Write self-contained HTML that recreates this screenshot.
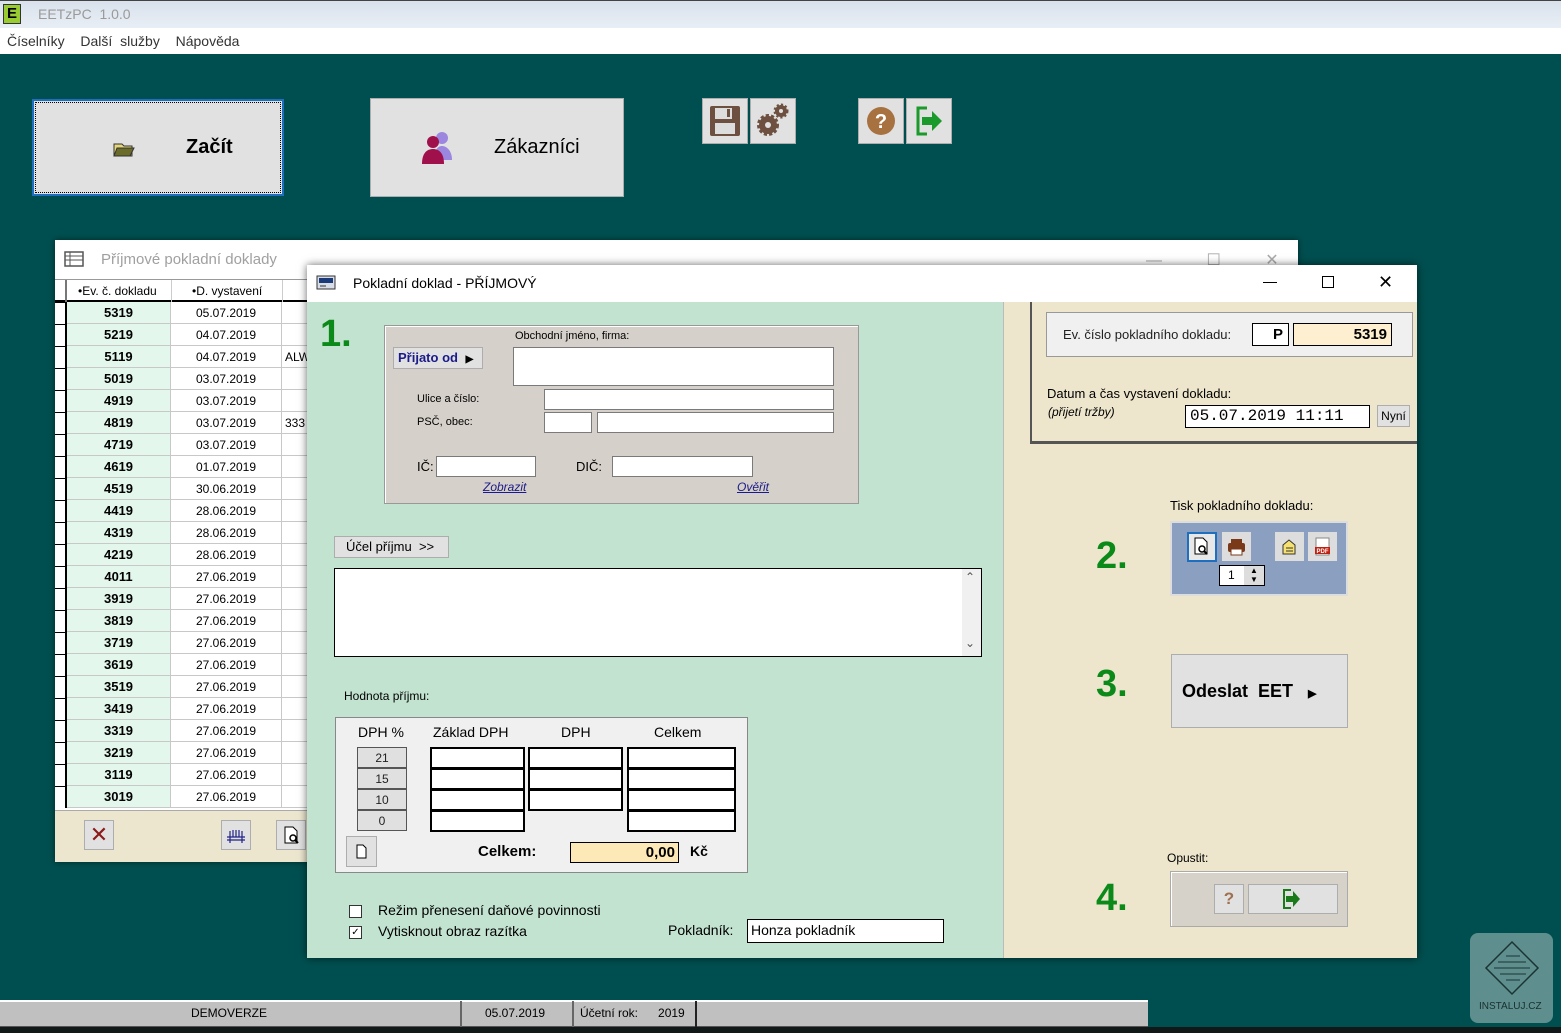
<!DOCTYPE html>
<html><head><meta charset="utf-8"><style>
*{box-sizing:border-box;margin:0;padding:0}
body{width:1561px;height:1033px;overflow:hidden;background:#004f50;font-family:"Liberation Sans",sans-serif;position:relative;font-size:12px;color:#000}
.a{position:absolute}
.btn{position:absolute;background:#e1e1e1;border:1px solid #adadad}
.inp{position:absolute;background:#fff;border:1px solid #7a7a7a}
.row{position:absolute;left:0;height:22px;width:300px;border-bottom:1px solid #c8c8c8}
.row .c1{position:absolute;left:12px;width:104px;height:21px;background:#e3f7ec;text-align:center;font-weight:bold;font-size:13px;line-height:22px;border-right:1px solid #c8c8c8}
.row .c2{position:absolute;left:116px;width:111px;height:21px;background:#fff;text-align:center;font-size:12px;line-height:22px;border-right:1px solid #c8c8c8}
.row .c3{position:absolute;left:227px;width:30px;height:21px;background:#fff;font-size:12px;line-height:22px;padding-left:3px}
.row .c0{position:absolute;left:0;width:12px;height:22px;background:#fff;border-right:2px solid #000;border-top:1px solid #000}
.g{color:#0b8a1a;font-weight:bold;font-size:38px}
.cell{position:absolute;background:#fff;border:2px solid #000;height:22px}
.dp{position:absolute;left:357px;width:50px;height:21px;background:#e0e0e0;border:1px solid #555;text-align:center;font-size:12px;line-height:20px;color:#222}
</style></head><body>
<!-- title bar -->
<div class="a" style="left:0;top:0;width:1561px;height:28px;background:linear-gradient(#d9e2ec,#e8eef5);border-top:1px solid #444"></div>
<div class="a" style="left:3px;top:4px;width:18px;height:20px;background:#9c3;border:1px solid #333;font-weight:bold;font-size:15px;text-align:center;line-height:18px">E</div>
<div class="a" style="left:38px;top:6px;font-size:14px;color:#9a9a9a">EETzPC&nbsp; 1.0.0</div>
<div class="a" style="left:0;top:28px;width:1561px;height:26px;background:#fff"></div>
<div class="a" style="left:7px;top:33px;font-size:14px;color:#333;word-spacing:4px">Číselníky&nbsp; Další služby&nbsp; Nápověda</div>

<!-- top buttons -->
<div class="a" style="left:32px;top:99px;width:252px;height:97px;background:#e1e1e1;border:2px solid #1e6fc0;outline:1px dotted #000;outline-offset:-4px"></div>
<div class="a" style="left:112px;top:138px;width:24px;height:20px">
<svg width="24" height="20"><path d="M2 6h8l2 2h8v10H2z" fill="#e6d77a" stroke="#333"/><path d="M5 10h17l-4 8H2z" fill="#6b6b2a" stroke="#333"/></svg></div>
<div class="a" style="left:186px;top:136px;font-size:20px;font-weight:bold">Začít</div>
<div class="btn" style="left:370px;top:98px;width:254px;height:99px"></div>
<svg class="a" style="left:420px;top:130px" width="36" height="36"><circle cx="22" cy="8" r="6" fill="#9b86e0"/><path d="M14 30c0-10 4-14 8-14s10 4 10 14z" fill="#9b86e0"/><circle cx="13" cy="12" r="6" fill="#a0104a"/><path d="M2 34c0-11 5-15 11-15s11 4 11 15z" fill="#a0104a"/></svg>
<div class="a" style="left:494px;top:136px;font-size:20px">Zákazníci</div>
<div class="btn" style="left:702px;top:98px;width:46px;height:46px"><svg width="44" height="44"><rect x="7" y="7" width="30" height="30" rx="2" fill="#6d5040"/><rect x="12" y="9" width="17" height="11" fill="#ddd"/><rect x="12" y="24" width="20" height="11" fill="#ddd"/><rect x="24" y="10" width="3" height="8" fill="#6d5040"/></svg></div>
<div class="btn" style="left:750px;top:98px;width:46px;height:46px"><svg width="44" height="44"><circle cx="17" cy="26" r="9" fill="#6d5040" stroke="#6d5040" stroke-width="4" stroke-dasharray="3 2"/><circle cx="17" cy="26" r="3" fill="#e1e1e1"/><circle cx="30" cy="12" r="6" fill="#6d5040" stroke="#6d5040" stroke-width="3" stroke-dasharray="2 2"/><circle cx="30" cy="12" r="2" fill="#e1e1e1"/></svg></div>
<div class="btn" style="left:858px;top:98px;width:46px;height:46px"><svg width="44" height="44"><circle cx="22" cy="22" r="14" fill="#a87240"/><text x="22" y="29" font-size="20" font-weight="bold" fill="#fff" text-anchor="middle" font-family="Liberation Sans">?</text></svg></div>
<div class="btn" style="left:906px;top:98px;width:46px;height:46px"><svg width="44" height="44"><path d="M20 9H11v26h9" fill="none" stroke="#1a9a2a" stroke-width="3"/><path d="M15 18h10v-6l10 10-10 10v-6H15z" fill="#1a9a2a"/></svg></div>

<!-- left window -->
<div class="a" style="left:55px;top:240px;width:1243px;height:622px;background:#fff;box-shadow:0 0 6px rgba(0,0,0,.5)"></div>
<svg class="a" style="left:64px;top:251px" width="20" height="16"><rect x="1" y="1" width="18" height="14" fill="none" stroke="#555" stroke-width="1.5"/><path d="M1 5h18M1 9h18M6 1v14" stroke="#555"/></svg>
<div class="a" style="left:101px;top:251px;font-size:15px;color:#a0a0a0">Příjmové pokladní doklady</div>
<div class="a" style="left:1146px;top:250px;color:#aaa;font-size:16px;word-spacing:40px">— ☐ ✕</div>
<div class="a" style="left:55px;top:279px;width:260px;height:23px;background:#fff;border-top:1px solid #999;border-bottom:2px solid #000"></div>
<div class="a" style="left:65px;top:280px;width:2px;height:22px;background:#777"></div>
<div class="a" style="left:78px;top:284px;font-size:12px">•Ev. č. dokladu</div>
<div class="a" style="left:171px;top:280px;width:1px;height:22px;background:#ccc"></div>
<div class="a" style="left:192px;top:284px;font-size:12px">•D. vystavení</div>
<div class="a" style="left:282px;top:280px;width:1px;height:22px;background:#ccc"></div>
<div class="a" style="left:55px;top:302px;width:260px;height:508px">
<div class="row" style="top:0"><div class="c0"></div><div class="c1">5319</div><div class="c2">05.07.2019</div><div class="c3"></div></div>
<div class="row" style="top:22px"><div class="c0"></div><div class="c1">5219</div><div class="c2">04.07.2019</div><div class="c3"></div></div>
<div class="row" style="top:44px"><div class="c0"></div><div class="c1">5119</div><div class="c2">04.07.2019</div><div class="c3">ALW</div></div>
<div class="row" style="top:66px"><div class="c0"></div><div class="c1">5019</div><div class="c2">03.07.2019</div><div class="c3"></div></div>
<div class="row" style="top:88px"><div class="c0"></div><div class="c1">4919</div><div class="c2">03.07.2019</div><div class="c3"></div></div>
<div class="row" style="top:110px"><div class="c0"></div><div class="c1">4819</div><div class="c2">03.07.2019</div><div class="c3">333</div></div>
<div class="row" style="top:132px"><div class="c0"></div><div class="c1">4719</div><div class="c2">03.07.2019</div><div class="c3"></div></div>
<div class="row" style="top:154px"><div class="c0"></div><div class="c1">4619</div><div class="c2">01.07.2019</div><div class="c3"></div></div>
<div class="row" style="top:176px"><div class="c0"></div><div class="c1">4519</div><div class="c2">30.06.2019</div><div class="c3"></div></div>
<div class="row" style="top:198px"><div class="c0"></div><div class="c1">4419</div><div class="c2">28.06.2019</div><div class="c3"></div></div>
<div class="row" style="top:220px"><div class="c0"></div><div class="c1">4319</div><div class="c2">28.06.2019</div><div class="c3"></div></div>
<div class="row" style="top:242px"><div class="c0"></div><div class="c1">4219</div><div class="c2">28.06.2019</div><div class="c3"></div></div>
<div class="row" style="top:264px"><div class="c0"></div><div class="c1">4011</div><div class="c2">27.06.2019</div><div class="c3"></div></div>
<div class="row" style="top:286px"><div class="c0"></div><div class="c1">3919</div><div class="c2">27.06.2019</div><div class="c3"></div></div>
<div class="row" style="top:308px"><div class="c0"></div><div class="c1">3819</div><div class="c2">27.06.2019</div><div class="c3"></div></div>
<div class="row" style="top:330px"><div class="c0"></div><div class="c1">3719</div><div class="c2">27.06.2019</div><div class="c3"></div></div>
<div class="row" style="top:352px"><div class="c0"></div><div class="c1">3619</div><div class="c2">27.06.2019</div><div class="c3"></div></div>
<div class="row" style="top:374px"><div class="c0"></div><div class="c1">3519</div><div class="c2">27.06.2019</div><div class="c3"></div></div>
<div class="row" style="top:396px"><div class="c0"></div><div class="c1">3419</div><div class="c2">27.06.2019</div><div class="c3"></div></div>
<div class="row" style="top:418px"><div class="c0"></div><div class="c1">3319</div><div class="c2">27.06.2019</div><div class="c3"></div></div>
<div class="row" style="top:440px"><div class="c0"></div><div class="c1">3219</div><div class="c2">27.06.2019</div><div class="c3"></div></div>
<div class="row" style="top:462px"><div class="c0"></div><div class="c1">3119</div><div class="c2">27.06.2019</div><div class="c3"></div></div>
<div class="row" style="top:484px"><div class="c0"></div><div class="c1">3019</div><div class="c2">27.06.2019</div><div class="c3"></div></div>
</div>
<div class="a" style="left:55px;top:810px;width:260px;height:52px;background:#ece6cf;border-top:1px solid #aaa"></div>
<div class="btn" style="left:84px;top:820px;width:30px;height:30px;color:#8b1a1a;font-size:22px;text-align:center;line-height:27px">✕</div>
<div class="btn" style="left:221px;top:820px;width:30px;height:30px"><svg width="28" height="28"><path d="M5 16h18M5 19h18M8 10v12M11 9v7M14 9v7M17 9v7M20 10v12" stroke="#22228a" stroke-width="1.2"/></svg></div>
<div class="btn" style="left:276px;top:820px;width:30px;height:30px"><svg width="28" height="28"><path d="M8 6h8l4 4v12H8z" fill="#fff" stroke="#000"/><circle cx="16" cy="17" r="3" fill="none" stroke="#000" stroke-width="1.5"/><path d="M18 19l3 3" stroke="#000" stroke-width="2"/></svg></div>

<!-- main dialog -->
<div class="a" style="left:307px;top:265px;width:1110px;height:693px;background:#c3e3d1;box-shadow:0 0 8px rgba(0,0,0,.6)"></div>
<div class="a" style="left:307px;top:265px;width:1110px;height:37px;background:#fff"></div>
<svg class="a" style="left:316px;top:275px" width="20" height="16"><rect x="1" y="1" width="18" height="13" fill="#d8dde8" stroke="#333"/><rect x="3" y="3" width="14" height="5" fill="#1a3a7a"/><path d="M4 11h6" stroke="#333"/></svg>
<div class="a" style="left:353px;top:275px;font-size:14px">Pokladní doklad - PŘÍJMOVÝ</div>
<div class="a" style="left:1263px;top:282px;width:14px;height:1px;background:#000"></div>
<div class="a" style="left:1322px;top:276px;width:12px;height:12px;border:1px solid #000"></div>
<div class="a" style="left:1378px;top:272px;font-size:18px;line-height:20px">✕</div>
<div class="a" style="left:1003px;top:302px;width:414px;height:656px;background:#ede6cc;border-left:1px solid #bbb"></div>

<div class="a g" style="left:320px;top:313px">1.</div>
<div class="a" style="left:384px;top:325px;width:475px;height:179px;background:#d5d0c9;border:1px solid #999;box-shadow:inset 1px 1px 0 #fff"></div>
<div class="btn" style="left:393px;top:347px;width:90px;height:22px;color:#1a1a8a;font-weight:bold;font-size:13px;line-height:20px;padding-left:4px">Přijato od <span style="font-size:10px;color:#000;margin-left:4px">▶</span></div>
<div class="a" style="left:515px;top:330px;font-size:11px">Obchodní jméno, firma:</div>
<div class="inp" style="left:513px;top:347px;width:321px;height:39px"></div>
<div class="a" style="left:417px;top:393px;font-size:11px">Ulice a číslo:</div>
<div class="inp" style="left:544px;top:389px;width:290px;height:21px"></div>
<div class="a" style="left:417px;top:416px;font-size:11px">PSČ, obec:</div>
<div class="inp" style="left:544px;top:412px;width:48px;height:21px"></div>
<div class="inp" style="left:597px;top:412px;width:237px;height:21px"></div>
<div class="a" style="left:417px;top:459px;font-size:13px">IČ:</div>
<div class="inp" style="left:436px;top:456px;width:100px;height:21px"></div>
<div class="a" style="left:576px;top:459px;font-size:13px">DIČ:</div>
<div class="inp" style="left:612px;top:456px;width:141px;height:21px"></div>
<div class="a" style="left:483px;top:480px;font-size:12px;font-style:italic;color:#1a1a8a;text-decoration:underline">Zobrazit</div>
<div class="a" style="left:737px;top:480px;font-size:12px;font-style:italic;color:#1a1a8a;text-decoration:underline">Ověřit</div>

<div class="btn" style="left:334px;top:536px;width:115px;height:22px;font-size:13px;line-height:20px;padding-left:11px">Účel příjmu&nbsp; &gt;&gt;</div>
<div class="a" style="left:334px;top:568px;width:648px;height:89px;background:#fff;border:1px solid #000"></div>
<div class="a" style="left:962px;top:569px;width:19px;height:87px;background:#f0f0f0"></div>
<div class="a" style="left:965px;top:570px;font-size:12px;color:#555">⌃</div>
<div class="a" style="left:965px;top:636px;font-size:12px;color:#555">⌄</div>

<div class="a" style="left:344px;top:689px;font-size:12px">Hodnota příjmu:</div>
<div class="a" style="left:335px;top:717px;width:413px;height:156px;background:#f0f0f0;border:1px solid #888"></div>
<div class="a" style="left:358px;top:724px;font-size:14px">DPH %</div>
<div class="a" style="left:433px;top:724px;font-size:14px">Základ DPH</div>
<div class="a" style="left:561px;top:724px;font-size:14px">DPH</div>
<div class="a" style="left:654px;top:724px;font-size:14px">Celkem</div>
<div class="dp" style="top:747px">21</div><div class="dp" style="top:768px">15</div><div class="dp" style="top:789px">10</div><div class="dp" style="top:810px">0</div>
<div class="cell" style="left:430px;top:747px;width:95px"></div><div class="cell" style="left:430px;top:768px;width:95px"></div><div class="cell" style="left:430px;top:789px;width:95px"></div><div class="cell" style="left:430px;top:810px;width:95px"></div>
<div class="cell" style="left:528px;top:747px;width:95px"></div><div class="cell" style="left:528px;top:768px;width:95px"></div><div class="cell" style="left:528px;top:789px;width:95px"></div>
<div class="cell" style="left:627px;top:747px;width:109px"></div><div class="cell" style="left:627px;top:768px;width:109px"></div><div class="cell" style="left:627px;top:789px;width:109px"></div><div class="cell" style="left:627px;top:810px;width:109px"></div>
<div class="btn" style="left:346px;top:836px;width:31px;height:31px"><svg width="29" height="29"><path d="M10 8h6l3 3v10h-9z" fill="#fff" stroke="#000"/></svg></div>
<div class="a" style="left:478px;top:843px;font-size:15px;font-weight:bold">Celkem:</div>
<div class="a" style="left:570px;top:842px;width:109px;height:21px;background:#fde9b8;border:1px solid #000;text-align:right;padding-right:3px;font-size:15px;font-weight:bold;line-height:19px">0,00</div>
<div class="a" style="left:690px;top:843px;font-size:14px;font-weight:bold">Kč</div>

<div class="a" style="left:349px;top:905px;width:13px;height:13px;background:#fff;border:1px solid #333"></div>
<div class="a" style="left:378px;top:902px;font-size:14px">Režim přenesení daňové povinnosti</div>
<div class="a" style="left:349px;top:926px;width:13px;height:13px;background:#fff;border:1px solid #333;font-size:10px;line-height:11px;text-align:center">✓</div>
<div class="a" style="left:378px;top:923px;font-size:14px">Vytisknout obraz razítka</div>
<div class="a" style="left:668px;top:922px;font-size:14px">Pokladník:</div>
<div class="a" style="left:747px;top:919px;width:197px;height:24px;background:#fff;border:1px solid #000;font-size:14px;padding:2px 3px">Honza pokladník</div>

<!-- right panel -->
<div class="a" style="left:1030px;top:302px;width:387px;height:142px;border-left:2px solid #555;border-bottom:3px solid #555"></div>
<div class="a" style="left:1046px;top:312px;width:367px;height:45px;background:#f0f0f0;border:1px solid #999"></div>
<div class="a" style="left:1063px;top:327px;font-size:13px;color:#222">Ev. číslo pokladního dokladu:</div>
<div class="a" style="left:1252px;top:323px;width:37px;height:23px;background:#fff;border:1px solid #000;text-align:right;padding-right:5px;font-weight:bold;font-size:15px;line-height:21px">P</div>
<div class="a" style="left:1293px;top:323px;width:99px;height:23px;background:#fdefcf;border:1px solid #000;text-align:right;padding-right:4px;font-weight:bold;font-size:15px;line-height:21px">5319</div>
<div class="a" style="left:1047px;top:386px;font-size:13px">Datum a čas vystavení dokladu:</div>
<div class="a" style="left:1048px;top:405px;font-size:12px;font-style:italic">(přijetí tržby)</div>
<div class="a" style="left:1185px;top:405px;width:185px;height:23px;background:#fff;border:1px solid #000;font-family:'Liberation Mono',monospace;font-size:16px;line-height:21px;padding-left:4px">05.07.2019 11:11</div>
<div class="btn" style="left:1377px;top:405px;width:33px;height:22px;font-size:12px;text-align:center;line-height:20px">Nyní</div>

<div class="a" style="left:1170px;top:498px;font-size:13px">Tisk pokladního dokladu:</div>
<div class="a g" style="left:1096px;top:535px">2.</div>
<div class="a" style="left:1170px;top:521px;width:178px;height:75px;background:#8ba0c0;border:2px solid #ddd"></div>
<div class="a" style="left:1187px;top:532px;width:30px;height:30px;background:#e8e8e8;border:2px solid #1e6fc0"><svg width="26" height="26"><path d="M6 4h8l4 4v12H6z" fill="#fff" stroke="#000"/><circle cx="13" cy="15" r="3" fill="none" stroke="#000" stroke-width="1.5"/><path d="M15 17l3 3" stroke="#000" stroke-width="2"/></svg></div>
<div class="a" style="left:1222px;top:532px;width:29px;height:29px;background:#ddd"><svg width="29" height="29"><rect x="9" y="7" width="11" height="5" fill="#7a3a1a"/><rect x="6" y="11" width="17" height="9" rx="2" fill="#7a3a1a"/><rect x="9" y="17" width="11" height="6" fill="#fff" stroke="#7a3a1a"/></svg></div>
<div class="a" style="left:1275px;top:532px;width:29px;height:29px;background:#ddd"><svg width="29" height="29"><path d="M8 13l6-5 6 5v9H8z" fill="#f5e070" stroke="#333"/><path d="M11 16h7M11 19h7" stroke="#333"/></svg></div>
<div class="a" style="left:1308px;top:532px;width:29px;height:29px;background:#ddd"><svg width="29" height="29"><rect x="8" y="6" width="13" height="17" fill="#fff" stroke="#888"/><rect x="7" y="15" width="15" height="7" fill="#c02010"/><text x="14.5" y="21" font-size="6" fill="#fff" text-anchor="middle" font-family="Liberation Sans" font-weight="bold">PDF</text></svg></div>
<div class="a" style="left:1219px;top:565px;width:46px;height:21px;background:#fff;border:1px solid #000;font-size:12px;line-height:19px;padding-left:8px">1</div>
<div class="a" style="left:1244px;top:566px;width:20px;height:19px;background:#ddd;font-size:8px;line-height:9px;text-align:center">▲<br>▼</div>

<div class="a g" style="left:1096px;top:663px">3.</div>
<div class="btn" style="left:1171px;top:654px;width:177px;height:74px;font-size:18px;font-weight:bold;line-height:72px;padding-left:10px">Odeslat&nbsp; EET <span style="font-size:11px;margin-left:10px">▶</span></div>

<div class="a" style="left:1167px;top:851px;font-size:12px">Opustit:</div>
<div class="a g" style="left:1096px;top:877px">4.</div>
<div class="a" style="left:1170px;top:871px;width:178px;height:56px;background:#d6d2ca;border:1px solid #aaa;box-shadow:inset 1px 1px 0 #fff"></div>
<div class="btn" style="left:1214px;top:884px;width:30px;height:30px;color:#a07050;font-weight:bold;font-size:17px;text-align:center;line-height:28px">?</div>
<div class="btn" style="left:1248px;top:884px;width:90px;height:30px"><svg width="88" height="28"><path d="M42 5h-7v18h7" fill="none" stroke="#1a7a1a" stroke-width="2"/><path d="M37 11h7v-5l7 8-7 8v-5h-7z" fill="#1a7a1a"/></svg></div>

<!-- watermark -->
<div class="a" style="left:1470px;top:933px;width:83px;height:90px;background:#5e8f8e;border-radius:8px"></div>
<svg class="a" style="left:1478px;top:938px" width="68" height="62"><path d="M34 4L60 30 34 56 8 30z" fill="none" stroke="#1a3333" stroke-width="1.5"/><path d="M16 30h36M20 24h28M22 36h26M28 18h14M28 42h14" stroke="#1a3333"/></svg>
<div class="a" style="left:1479px;top:1001px;font-size:10px;color:#1a2f2f">INSTALUJ.CZ</div>

<!-- status bar -->
<div class="a" style="left:0;top:1000px;width:1148px;height:27px;background:#c0c0c0;border-top:2px solid #fff;border-bottom:1px solid #555"></div>
<div class="a" style="left:460px;top:1001px;width:2px;height:26px;background:#666"></div>
<div class="a" style="left:572px;top:1001px;width:2px;height:26px;background:#666"></div>
<div class="a" style="left:695px;top:1001px;width:2px;height:26px;background:#222"></div>
<div class="a" style="left:191px;top:1006px;font-size:12px">DEMOVERZE</div>
<div class="a" style="left:485px;top:1006px;font-size:12px">05.07.2019</div>
<div class="a" style="left:580px;top:1006px;font-size:12px">Účetní rok:&nbsp;&nbsp;&nbsp;&nbsp;&nbsp; 2019</div>
<div class="a" style="left:0;top:1027px;width:1561px;height:6px;background:#101818"></div>
</body></html>
